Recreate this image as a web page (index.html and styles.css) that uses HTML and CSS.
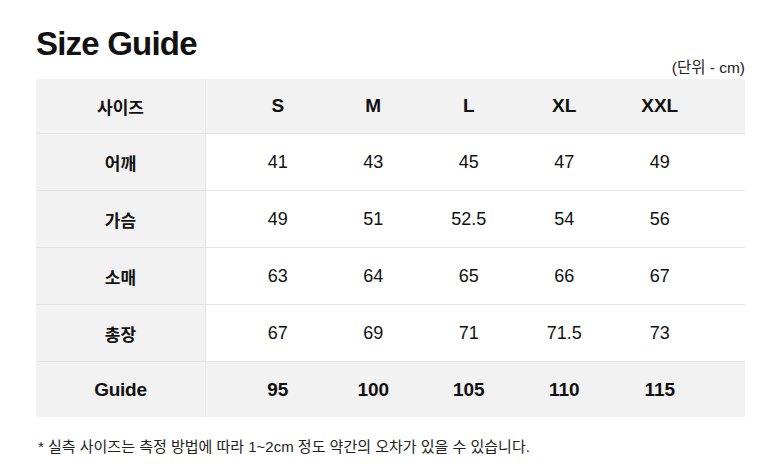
FILE: index.html
```html
<!DOCTYPE html>
<html lang="ko">
<head>
<meta charset="utf-8">
<title>Size Guide</title>
<link rel="stylesheet" href="styles.css">
</head>
<body>
<div class="page">
  <h1 class="title">Size Guide</h1>
  <div class="unit">(단위 - cm)</div>
  <div class="table">
    <div class="row head">
      <div class="label">사이즈</div>
      <div class="cells"><span>S</span><span>M</span><span>L</span><span>XL</span><span>XXL</span></div>
    </div>
    <div class="row">
      <div class="label">어깨</div>
      <div class="cells"><span>41</span><span>43</span><span>45</span><span>47</span><span>49</span></div>
    </div>
    <div class="row">
      <div class="label">가슴</div>
      <div class="cells"><span>49</span><span>51</span><span>52.5</span><span>54</span><span>56</span></div>
    </div>
    <div class="row">
      <div class="label">소매</div>
      <div class="cells"><span>63</span><span>64</span><span>65</span><span>66</span><span>67</span></div>
    </div>
    <div class="row">
      <div class="label">총장</div>
      <div class="cells"><span>67</span><span>69</span><span>71</span><span>71.5</span><span>73</span></div>
    </div>
    <div class="row guide">
      <div class="label latin">Guide</div>
      <div class="cells"><span>95</span><span>100</span><span>105</span><span>110</span><span>115</span></div>
    </div>
  </div>
  <p class="note">* 실측 사이즈는 측정 방법에 따라 1~2cm 정도 약간의 오차가 있을 수 있습니다.</p>
</div>
</body>
</html>
```

FILE: styles.css
```css
* { box-sizing: border-box; }
html, body { margin: 0; padding: 0; background: #ffffff; }
body {
  font-family: "Liberation Sans", "Noto Sans CJK KR", sans-serif;
  color: #111111;
}
.page {
  width: 780px;
  padding: 24px 35px 0 36px;
}
.title {
  margin: 0;
  font-size: 33px;
  line-height: 40px;
  font-weight: 700;
  letter-spacing: -0.8px;
}
.unit {
  margin-top: -5px;
  margin-bottom: 3px;
  font-size: 15.5px;
  line-height: 17px;
  text-align: right;
  color: #222222;
}
.table {
  display: flex;
  flex-direction: column;
}
.row {
  display: grid;
  grid-template-columns: 170px 1fr;
  height: 57px;
  border-top: 1px solid #e4e4e4;
}
.row.head {
  height: 54px;
  border-top: none;
  background: #f2f2f2;
  font-weight: 700;
}
.row.guide {
  height: 56px;
  background: #f2f2f2;
  font-weight: 700;
}
.row.head .cells,
.row.guide .cells {
  font-size: 19px;
}
.label {
  display: flex;
  align-items: center;
  justify-content: center;
  background: #f2f2f2;
  border-right: 1px solid #e6e6e6;
  font-size: 17px;
  font-weight: 700;
}
.label.latin { font-size: 19px; letter-spacing: -0.3px; }
.cells {
  display: grid;
  grid-template-columns: repeat(5, 95.5px);
  padding-left: 24px;
  align-items: center;
  font-size: 18px;
}
.cells span { text-align: center; }
.note {
  margin: 20px 0 0 2px;
  font-size: 15px;
  line-height: 20px;
  color: #222222;
}
```
